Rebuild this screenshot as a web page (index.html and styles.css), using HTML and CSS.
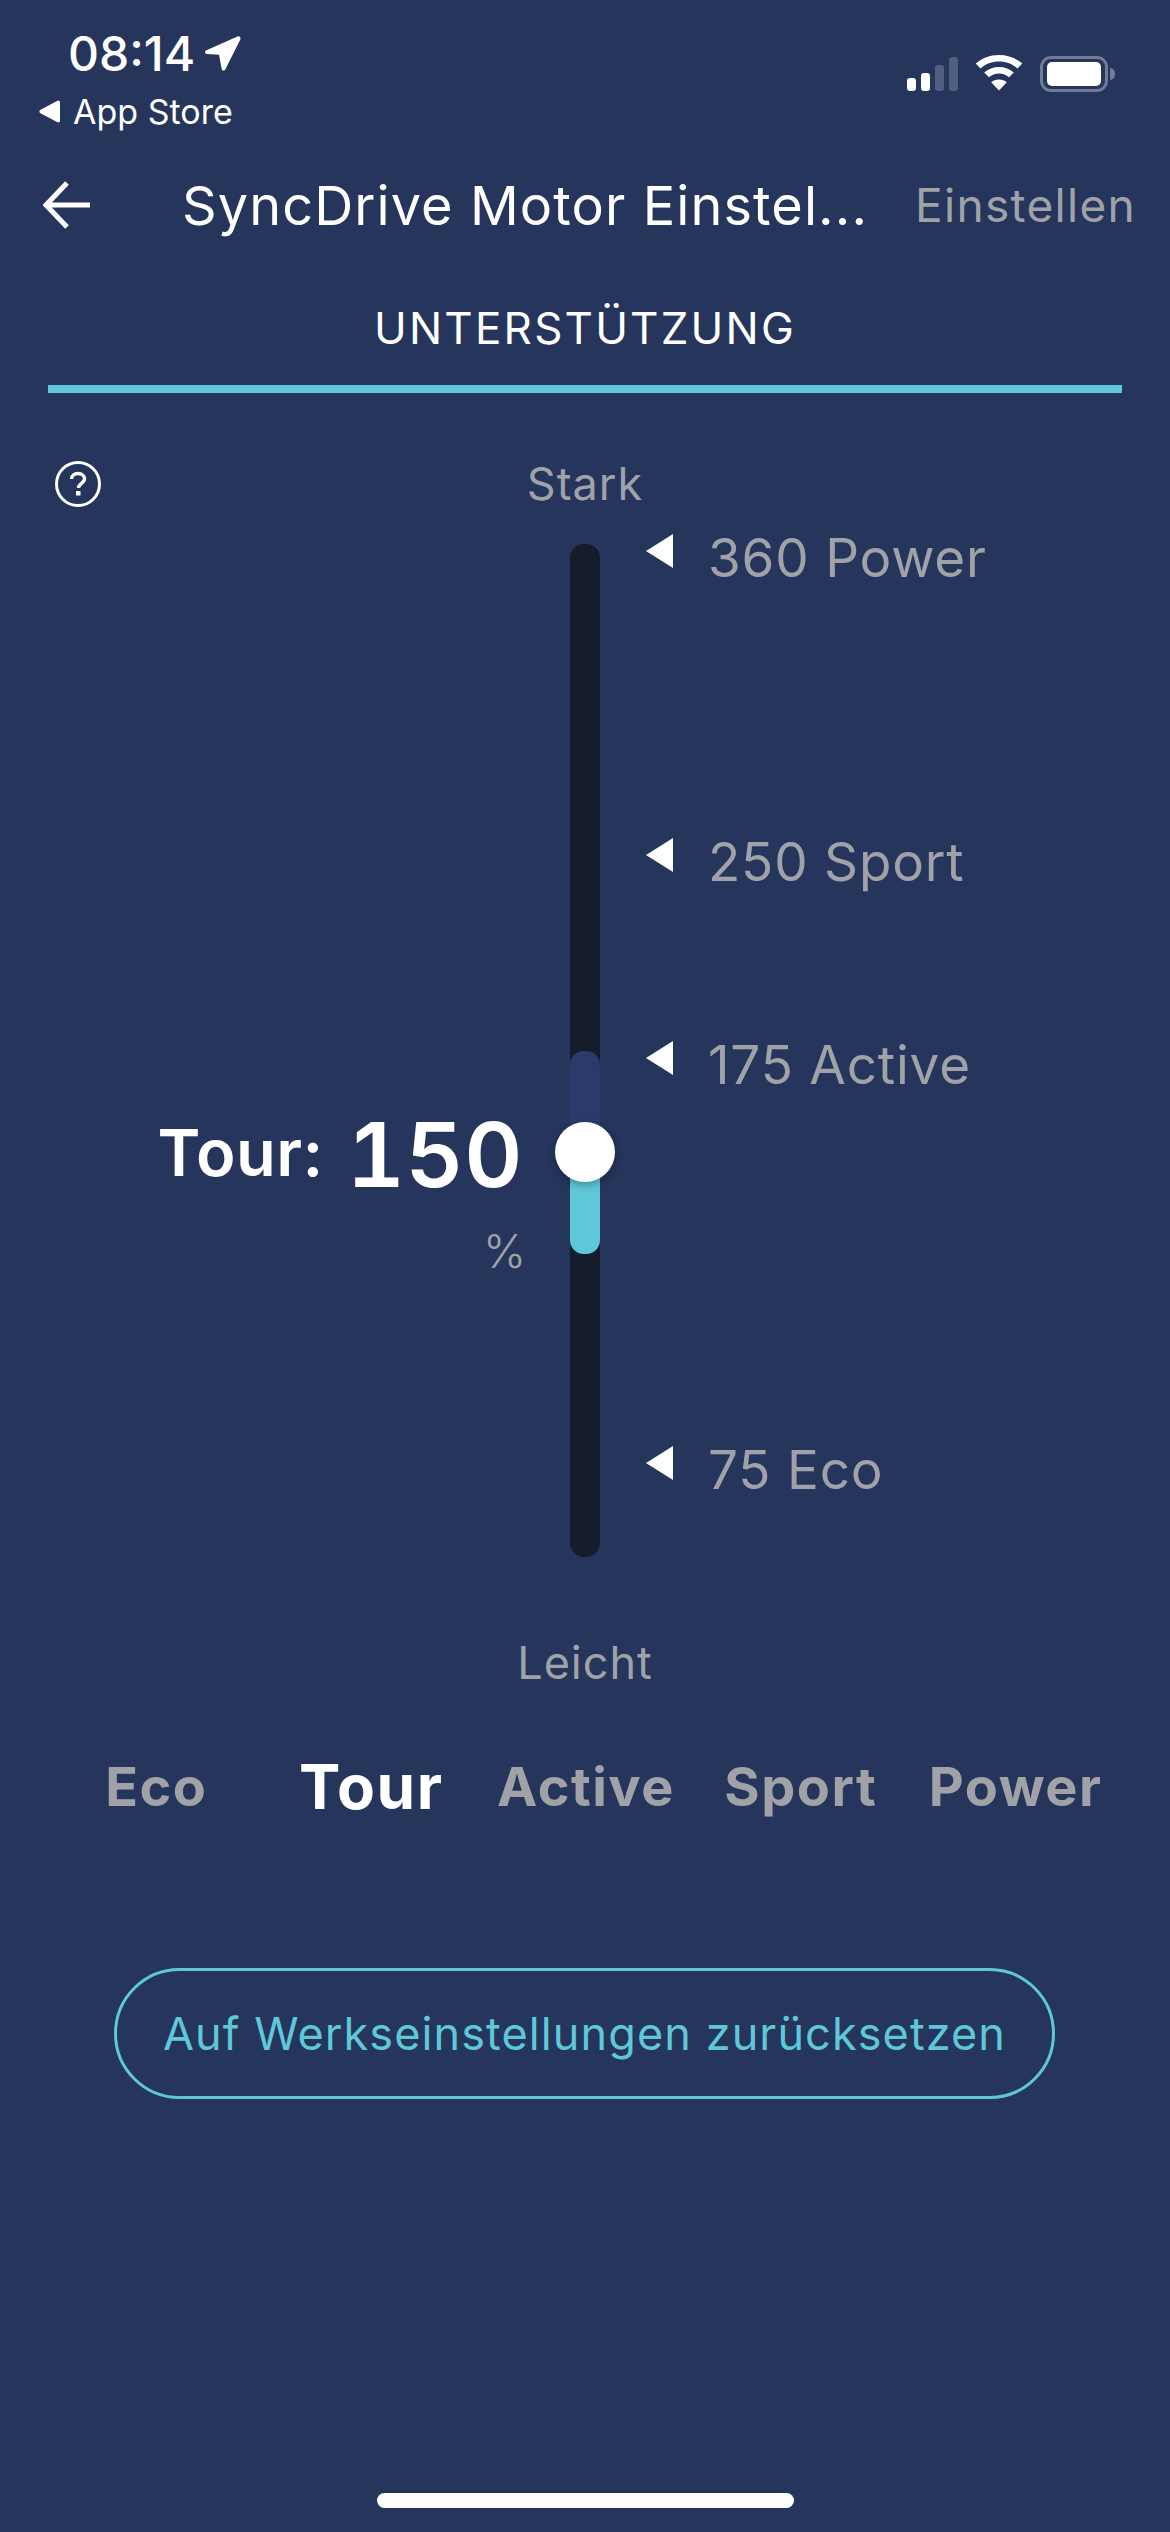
FILE: index.html
```html
<!DOCTYPE html>
<html lang="de">

<head>
    <meta charset="UTF-8">
    <meta name="viewport" content="width=device-width, initial-scale=1.0">
    <title>SyncDrive Motor Einstellungen</title>
    <link rel="stylesheet" href="styles.css">
</head>

<body>
    <section class="phone">
        <header class="status">
            <div class="status-left">
                <div class="time">
                    <span>08:14</span>
                    <svg class="locate" viewBox="0 0 36 35"><path d="M32.500.4 1.500 14.300c-2.300 1-1.700 3.700.8 3.800l11.700.6 2.700 14.300c.4 1.900 2.900 2.100 3.700.2L35.300 3.600c.8-2.200-.8-4-2.800-3.200Z" fill="#fff"/></svg>
                </div>
                <div class="back-app">
                    <svg class="back-tri" viewBox="0 0 21 23"><path d="M18.500 .7 1.500 9.800c-1.500.8-1.500 2.600 0 3.400l17 9.100c1.200.6 2.500-.2 2.500-1.500V2.200C21 .9 19.700.1 18.500.7Z" fill="#fff"/></svg>
                    <span>App Store</span>
                </div>
            </div>
            <div class="status-right">
                <div class="signal">
                    <i class="bar b1"></i>
                    <i class="bar b2"></i>
                    <i class="bar b3 off"></i>
                    <i class="bar b4 off"></i>
                </div>
                <svg class="wifi" viewBox="0 0 48 39" preserveAspectRatio="none">
                    <path d="M24 0C15 0 6.800 3.500.7 9.300l4.800 5.200C10.400 9.900 16.900 7 24 7s13.600 2.900 18.500 7.500l4.800-5.200C41.200 3.500 33 0 24 0Z" fill="#fff"/>
                    <path d="M24 13c-5.700 0-10.900 2.200-14.800 5.900l4.800 5.200c2.600-2.400 6.100-4 10-4s7.400 1.600 10 4l4.800-5.200C34.900 15.200 29.700 13 24 13Z" fill="#fff"/>
                    <path d="M24 26.500c-3 0-5.700 1.100-7.800 3L24 38.500l7.800-9c-2.100-1.900-4.800-3-7.800-3Z" fill="#fff"/>
                </svg>
                <div class="battery">
                    <div class="battery-body"><div class="battery-level"></div></div>
                    <div class="battery-nub"></div>
                </div>
            </div>
        </header>

        <nav class="topbar">
            <svg class="arrow" viewBox="0 0 48 48"><path d="M47 24H3M24 2 3 24l21 22" fill="none" stroke="#fff" stroke-width="5"/></svg>
            <h1>SyncDrive Motor Einstel...</h1>
            <a class="action">Einstellen</a>
        </nav>

        <div class="tab">UNTERSTÜTZUNG</div>

        <section class="assist">
            <svg class="help" viewBox="0 0 46 46">
                <circle cx="23" cy="23" r="21.500" fill="none" stroke="#fff" stroke-width="3"/>
                <path d="M16.500 18c0-3.300 2.800-5.500 6.500-5.500s6.500 2.200 6.500 5.300c0 4.600-6 4.700-6 9.200" fill="none" stroke="#fff" stroke-width="3.400"/>
                <rect x="21" y="30" width="4.500" height="4.500" fill="#fff"/>
            </svg>
            <div class="end-label">Stark</div>

            <div class="scale">
                <div class="readout">
                    <div class="readout-main">
                        <span class="readout-name">Tour:</span>
                        <span class="readout-value">150</span>
                    </div>
                    <div class="readout-unit">%</div>
                </div>

                <div class="track">
                    <div class="range"><div class="range-fill"></div></div>
                    <div class="thumb"></div>
                </div>

                <ul class="marks">
                    <li class="mark m-power"><i class="tri"></i>360 Power</li>
                    <li class="mark m-sport"><i class="tri"></i>250 Sport</li>
                    <li class="mark m-active"><i class="tri"></i>175 Active</li>
                    <li class="mark m-eco"><i class="tri"></i>75 Eco</li>
                </ul>
            </div>

            <div class="end-label low">Leicht</div>
        </section>

        <div class="modes">
            <span>Eco</span>
            <span class="current">Tour</span>
            <span>Active</span>
            <span>Sport</span>
            <span>Power</span>
        </div>

        <button class="reset">Auf Werkseinstellungen zurücksetzen</button>

        <div class="home"></div>
    </section>
</body>

</html>
```

FILE: styles.css
```css
* {
    margin: 0;
    padding: 0;
    box-sizing: border-box;
}

body {
    font-family: Inter, "Liberation Sans", sans-serif;
    background-color: #25355c;
    color: #fff;
}

.phone {
    position: relative;
    width: 1170px;
    height: 2532px;
    overflow: hidden;
    background-color: #25355c;
}

/* status bar */
.status {
    display: flex;
    justify-content: space-between;
    height: 145px;
    padding: 28px 55px 0 39px;
}

.time {
    display: flex;
    align-items: center;
    gap: 10px;
    margin-left: 29px;
    height: 50px;
    font-size: 48px;
    font-weight: 500;
}

.locate {
    width: 36px;
    height: 35px;
}

.back-app {
    display: flex;
    align-items: center;
    gap: 13px;
    margin-top: 13px;
    font-size: 34px;
}

.back-tri {
    width: 21px;
    height: 23px;
}

.status-right {
    display: flex;
    align-items: flex-end;
    height: 65px;
}

.signal {
    display: flex;
    align-items: flex-end;
    gap: 5px;
    height: 34px;
    margin-bottom: 2px;
}

.bar {
    width: 9px;
    border-radius: 3px;
    background-color: #fff;
}

.bar.off {
    background-color: #505e80;
}

.b1 { height: 13px; }
.b2 { height: 18px; }
.b3 { height: 26px; }
.b4 { height: 34px; }

.wifi {
    width: 48px;
    height: 36px;
    margin: 0 17px 2px 17px;
}

.battery {
    display: flex;
    align-items: center;
    margin-bottom: 1px;
}

.battery-body {
    width: 68px;
    height: 36px;
    padding: 3px 4px;
    border: 3px solid #6f7b97;
    border-radius: 11px;
}

.battery-level {
    height: 100%;
    border-radius: 5px;
    background-color: #fff;
}

.battery-nub {
    width: 5px;
    height: 12px;
    margin-left: 2px;
    border-radius: 0 6px 6px 0;
    background-color: #6f7b97;
}

/* nav */
.topbar {
    display: flex;
    align-items: center;
    height: 120px;
    padding-left: 43px;
}

.arrow {
    width: 48px;
    height: 48px;
}

.topbar h1 {
    margin-left: 91px;
    font-size: 54px;
    font-weight: 400;
    letter-spacing: 1.100px;
    white-space: nowrap;
}

.action {
    margin-left: 47px;
    font-size: 46px;
    color: #a0a2a8;
    letter-spacing: 1.300px;
    white-space: nowrap;
}

.tab {
    width: 1074px;
    height: 128px;
    margin-left: 48px;
    padding-top: 36px;
    border-bottom: 8px solid #5fc8d8;
    font-size: 44px;
    text-align: center;
    letter-spacing: 2.200px;
}

/* slider */
.assist {
    position: relative;
    padding-top: 64px;
}

.help {
    position: absolute;
    left: 55px;
    top: 68px;
    width: 46px;
    height: 46px;
}

.end-label {
    font-size: 45px;
    line-height: 54px;
    text-align: center;
    color: #a0a2a8;
    letter-spacing: 1px;
}

.end-label.low {
    margin-top: 79px;
}

.scale {
    display: grid;
    grid-template-columns: 570px 30px 1fr;
    height: 1013px;
    margin-top: 33px;
}

.readout {
    padding-top: 556px;
    padding-right: 47px;
    text-align: right;
}

.readout-main {
    display: flex;
    justify-content: flex-end;
    align-items: center;
    gap: 23px;
    font-weight: 600;
}

.readout-name {
    padding-bottom: 5px;
    font-size: 65px;
    letter-spacing: 0.500px;
}

.readout-value {
    font-size: 90px;
    line-height: 110px;
    font-variant-numeric: tabular-nums;
    letter-spacing: 0.500px;
}

.readout-unit {
    margin-top: 13px;
    margin-right: -3px;
    font-size: 46px;
    font-weight: 300;
    color: #a0a2a8;
}

.track {
    position: relative;
    border-radius: 14px;
    background-color: #151d2c;
}

.range {
    position: absolute;
    left: 0;
    right: 0;
    top: 507px;
    height: 203px;
    border-radius: 14px;
    overflow: hidden;
    background-color: #2a3b6b;
}

.range-fill {
    height: 102px;
    margin-top: 101px;
    background-color: #5fc8d8;
}

.thumb {
    position: absolute;
    left: -15px;
    top: 578px;
    width: 60px;
    height: 60px;
    border-radius: 50%;
    background-color: #fff;
    box-shadow: 0 3px 8px rgba(0, 0, 0, 0.3);
}

.marks {
    position: relative;
    list-style: none;
}

.mark {
    position: absolute;
    left: 46px;
    display: flex;
    align-items: center;
    height: 64px;
    font-size: 53px;
    color: #a0a2a8;
    letter-spacing: 0.800px;
    white-space: nowrap;
}

.tri {
    width: 0;
    height: 0;
    margin-right: 35px;
    border-top: 17px solid transparent;
    border-bottom: 17px solid transparent;
    border-right: 27px solid #fff;
    transform: translateY(-7px);
}

.m-power { top: -18px; }
.m-sport { top: 286px; }
.m-active { top: 489px; }
.m-eco { top: 894px; }

/* mode row */
.modes {
    display: grid;
    grid-template-columns: repeat(5, 1fr);
    align-items: center;
    width: 1074px;
    height: 80px;
    margin: 56px 0 0 49px;
    font-size: 54px;
    font-weight: 700;
    text-align: center;
    color: #a0a2a8;
    letter-spacing: 1.500px;
}

.modes .current {
    font-size: 62px;
    color: #fff;
}

.reset {
    display: block;
    width: 941px;
    height: 131px;
    margin: 142px 0 0 114px;
    border: 3px solid #5fc8d8;
    border-radius: 66px;
    background: none;
    font-family: inherit;
    font-size: 45px;
    color: #5fc8d8;
    letter-spacing: 1.100px;
}

.home {
    position: absolute;
    left: 377px;
    bottom: 24px;
    width: 417px;
    height: 15px;
    border-radius: 8px;
    background-color: #fff;
}
```
